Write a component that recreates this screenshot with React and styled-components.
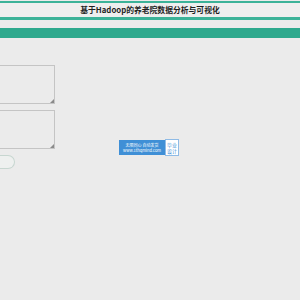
import styled, { createGlobalStyle } from "styled-components";

const Global = createGlobalStyle`
  html, body {
    margin: 0;
    padding: 0;
    background: #ebebeb;
    font-family: "Noto Sans CJK SC", "Liberation Sans", sans-serif;
  }
`;

const Page = styled.div`
  width: 300px;
  height: 300px;
  overflow: hidden;
  background: #ebebeb;
  position: relative;
`;

const Header = styled.div`
  margin-top: 1px;
  border-top: 2px solid #3cb298;
  border-bottom: 3px solid #3cb298;
  height: 14px;
  background: #eeeeee;
  display: flex;
  align-items: center;
  justify-content: center;
`;

const Title = styled.h1`
  margin: 0;
  font-size: 7.8px;
  font-weight: bold;
  color: #1e1e1e;
  line-height: 1;
`;

const Band = styled.div`
  margin-top: 8px;
  height: 10px;
  background: #2ea98d;
`;

const Form = styled.div`
  display: flex;
  flex-direction: column;
  align-items: flex-start;
  gap: 6px;
  padding-top: 27px;
`;

const AreaWrap = styled.div`
  position: relative;
  width: 55px;
  height: 39px;

  &::after {
    content: "";
    position: absolute;
    right: 1px;
    bottom: 1px;
    width: 0;
    height: 0;
    border-left: 4px solid transparent;
    border-bottom: 4px solid #8a8a8a;
  }
`;

const Area = styled.textarea`
  display: block;
  box-sizing: border-box;
  width: 100%;
  height: 100%;
  border: 1px solid #c4c4c4;
  border-left: none;
  background: #ebebeb;
  margin: 0;
  padding: 0;
  outline: none;
  resize: none;
`;

const Button = styled.button`
  box-sizing: border-box;
  width: 15px;
  height: 14px;
  border: 1px solid #c7d6d0;
  border-left: none;
  border-radius: 0 7px 7px 0;
  background: #eef0ef;
  padding: 0;
`;

const Badge = styled.div`
  position: absolute;
  left: 119px;
  top: 139px;
  display: flex;
  align-items: center;
`;

const BadgeBlue = styled.div`
  background: #3f8fd6;
  color: #fff;
  width: 46px;
  height: 15px;
  display: flex;
  flex-direction: column;
  justify-content: center;
  align-items: center;
  font-size: 4px;
  line-height: 5px;
  white-space: nowrap;
`;

const BadgeWhite = styled.div`
  background: #fff;
  color: #3f8fd6;
  border: 1px solid #8fbbe6;
  width: 14px;
  height: 17px;
  box-sizing: border-box;
  display: flex;
  flex-direction: column;
  justify-content: center;
  align-items: center;
  font-size: 5px;
  line-height: 6px;
`;

export default function App() {
  return (
    <Page>
      <Global />
      <Header>
        <Title>基于Hadoop的养老院数据分析与可视化</Title>
      </Header>
      <Band />
      <Form>
        <AreaWrap>
          <Area />
        </AreaWrap>
        <AreaWrap>
          <Area />
        </AreaWrap>
        <Button />
      </Form>
      <Badge>
        <BadgeBlue>
          <span>无限同心 自动发货</span>
          <span>www.1thqmind.com</span>
        </BadgeBlue>
        <BadgeWhite>
          <span>毕业</span>
          <span>设计</span>
        </BadgeWhite>
      </Badge>
    </Page>
  );
}
